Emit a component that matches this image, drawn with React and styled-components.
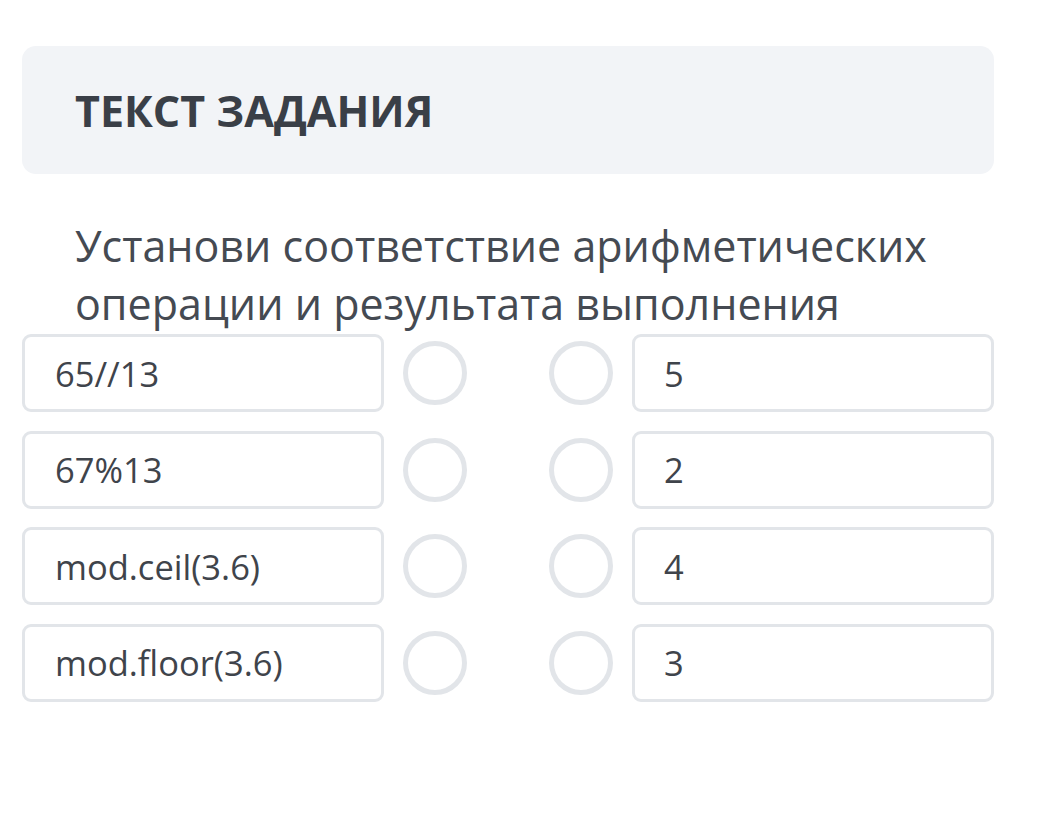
import React from 'react';
import styled, { createGlobalStyle } from 'styled-components';

const GlobalStyle = createGlobalStyle`
  body {
    margin: 0;
    background: #fff;
    font-family: "Open Sans", "Noto Sans", sans-serif;
  }
`;

const Page = styled.div`
  width: 972px;
  padding: 46px 0 0 22px;
`;

const Header = styled.div`
  background-color: #f2f4f7;
  border-radius: 14px;
  height: 128px;
  display: flex;
  align-items: center;
  padding-left: 53px;
`;

const HeaderTitle = styled.h1`
  margin: 0;
  font-size: 43px;
  font-weight: 700;
  color: #3a3f47;
`;

const Question = styled.p`
  margin: 43px 0 0;
  padding-left: 53px;
  font-size: 43px;
  line-height: 58px;
  color: #454a52;
`;

const Rows = styled.div`
  display: flex;
  flex-direction: column;
  gap: 18.5px;
  margin-top: 1px;
`;

const Row = styled.div`
  display: grid;
  grid-template-columns: 362px 64px 1fr 64px 362px;
  column-gap: 19px;
  align-items: center;
`;

const Cell = styled.div`
  box-sizing: border-box;
  height: 78px;
  border: 3px solid #e2e5e9;
  border-radius: 9px;
  display: flex;
  align-items: center;
  padding-left: ${(p) => p.$indent}px;
  font-size: 34.5px;
  color: #3f444b;
`;

const Dot = styled.div`
  box-sizing: border-box;
  width: 64px;
  height: 64px;
  border: 5.5px solid #e2e5e9;
  border-radius: 50%;
`;

const pairs = [
  ['65//13', '5'],
  ['67%13', '2'],
  ['mod.ceil(3.6)', '4'],
  ['mod.floor(3.6)', '3'],
];

export default function App() {
  return (
    <Page>
      <GlobalStyle />
      <Header>
        <HeaderTitle>ТЕКСТ ЗАДАНИЯ</HeaderTitle>
      </Header>
      <Question>
        Установи соответствие арифметических операции и результата выполнения
      </Question>
      <Rows>
        {pairs.map(([left, right]) => (
          <Row key={left}>
            <Cell $indent={30}>{left}</Cell>
            <Dot />
            <span />
            <Dot />
            <Cell $indent={29}>{right}</Cell>
          </Row>
        ))}
      </Rows>
    </Page>
  );
}
